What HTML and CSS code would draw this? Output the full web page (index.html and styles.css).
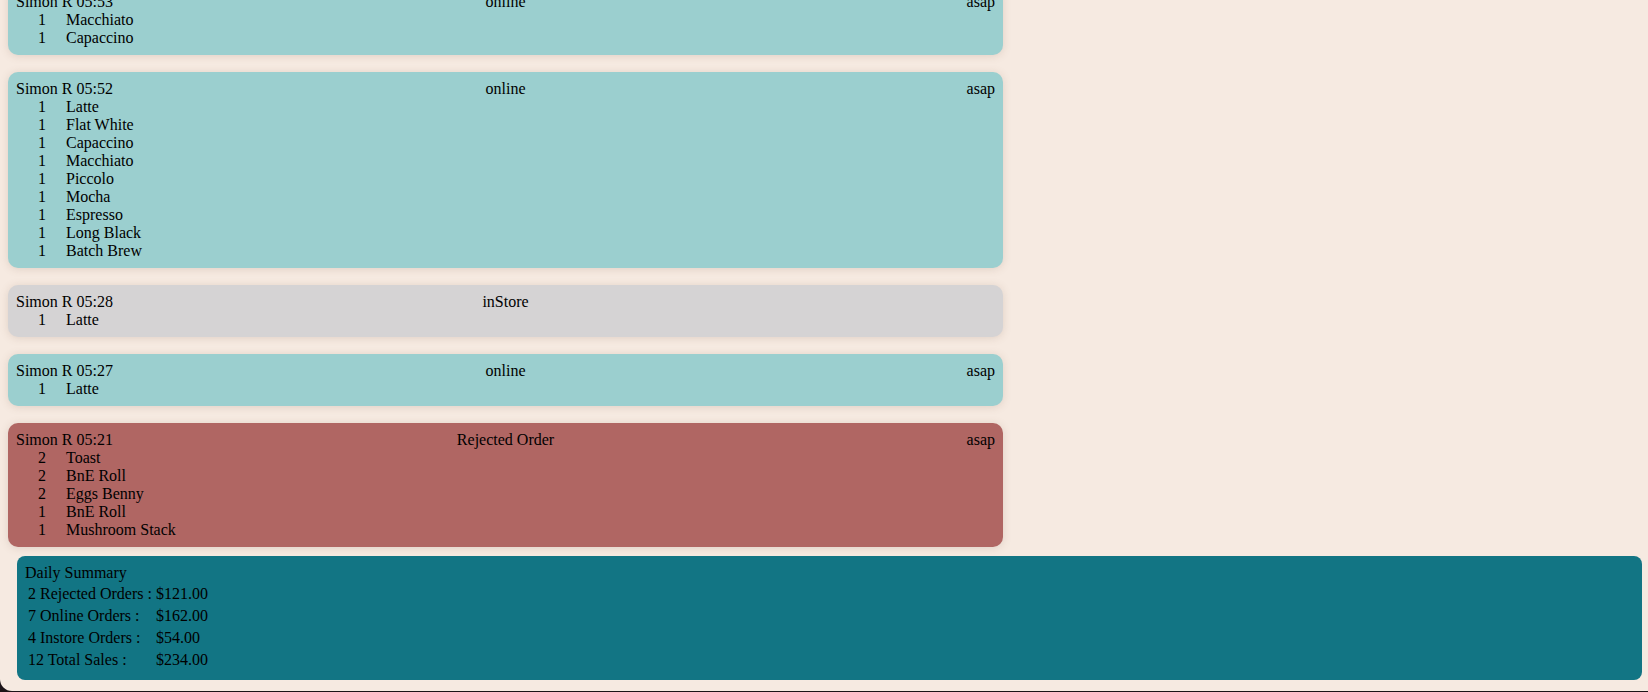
FILE: index.html
```html
<!DOCTYPE html>
<html>
<head>
<meta charset="utf-8">
<link rel="stylesheet" href="styles.css">
</head>
<body>
<div class="page">
  <div class="orders">
    <div class="card online first">
      <div class="head"><span class="who">Simon R 05:53</span><span class="kind">online</span><span class="when">asap</span></div>
      <div class="item"><span class="qty">1</span><span>Macchiato</span></div>
      <div class="item"><span class="qty">1</span><span>Capaccino</span></div>
    </div>
    <div class="card online">
      <div class="head"><span class="who">Simon R 05:52</span><span class="kind">online</span><span class="when">asap</span></div>
      <div class="item"><span class="qty">1</span><span>Latte</span></div>
      <div class="item"><span class="qty">1</span><span>Flat White</span></div>
      <div class="item"><span class="qty">1</span><span>Capaccino</span></div>
      <div class="item"><span class="qty">1</span><span>Macchiato</span></div>
      <div class="item"><span class="qty">1</span><span>Piccolo</span></div>
      <div class="item"><span class="qty">1</span><span>Mocha</span></div>
      <div class="item"><span class="qty">1</span><span>Espresso</span></div>
      <div class="item"><span class="qty">1</span><span>Long Black</span></div>
      <div class="item"><span class="qty">1</span><span>Batch Brew</span></div>
    </div>
    <div class="card instore">
      <div class="head"><span class="who">Simon R 05:28</span><span class="kind">inStore</span><span class="when"></span></div>
      <div class="item"><span class="qty">1</span><span>Latte</span></div>
    </div>
    <div class="card online">
      <div class="head"><span class="who">Simon R 05:27</span><span class="kind">online</span><span class="when">asap</span></div>
      <div class="item"><span class="qty">1</span><span>Latte</span></div>
    </div>
    <div class="card rejected">
      <div class="head"><span class="who">Simon R 05:21</span><span class="kind">Rejected Order</span><span class="when">asap</span></div>
      <div class="item"><span class="qty">2</span><span>Toast</span></div>
      <div class="item"><span class="qty">2</span><span>BnE Roll</span></div>
      <div class="item"><span class="qty">2</span><span>Eggs Benny</span></div>
      <div class="item"><span class="qty">1</span><span>BnE Roll</span></div>
      <div class="item"><span class="qty">1</span><span>Mushroom Stack</span></div>
    </div>
  </div>
  <div class="summary">
    <div class="summary-title">Daily Summary</div>
    <table class="summary-table">
      <tr><td>2 Rejected Orders :</td><td>$121.00</td></tr>
      <tr><td>7 Online Orders :</td><td>$162.00</td></tr>
      <tr><td>4 Instore Orders :</td><td>$54.00</td></tr>
      <tr><td>12 Total Sales :</td><td>$234.00</td></tr>
    </table>
  </div>
</div>
</body>
</html>
```
FILE: styles.css
```css
html, body {
  margin: 0;
  padding: 0;
  height: 692px;
  overflow: hidden;
  background: #1c1418;
}

body {
  font-family: "Liberation Serif", "Times New Roman", serif;
  font-size: 16px;
  line-height: 18px;
  color: #000;
}

.page {
  height: 691px;
  background: #f6eae1;
  border-bottom-left-radius: 12px;
  padding: 0 8px;
  box-sizing: border-box;
  overflow: hidden;
}

.orders {
  display: flex;
  flex-direction: column;
  gap: 17px;
}

.card {
  width: 995px;
  box-sizing: border-box;
  padding: 8px;
  border-radius: 10px;
  box-shadow: 0 1px 8px rgba(120, 90, 70, 0.18);
}

.card.first {
  margin-top: -15px;
}

.online { background: #9bcfcf; }
.instore { background: #d5d3d4; }
.rejected { background: #b06663; }

.head {
  display: grid;
  grid-template-columns: 1fr auto 1fr;
  height: 18px;
}

.who { text-align: left; }
.kind { text-align: center; }
.when { text-align: right; }

.item {
  display: flex;
  height: 18px;
}

.qty {
  margin-left: 22px;
  width: 28px;
}

.summary {
  margin: 9px -2px 0 9px;
  padding: 8px;
  background: #127584;
  border-radius: 8px;
}

.summary-title {
  height: 18px;
}

.summary-table {
  border-spacing: 2px;
  font-size: 16px;
  line-height: 18px;
}

.summary-table td {
  padding: 1px;
}
```
